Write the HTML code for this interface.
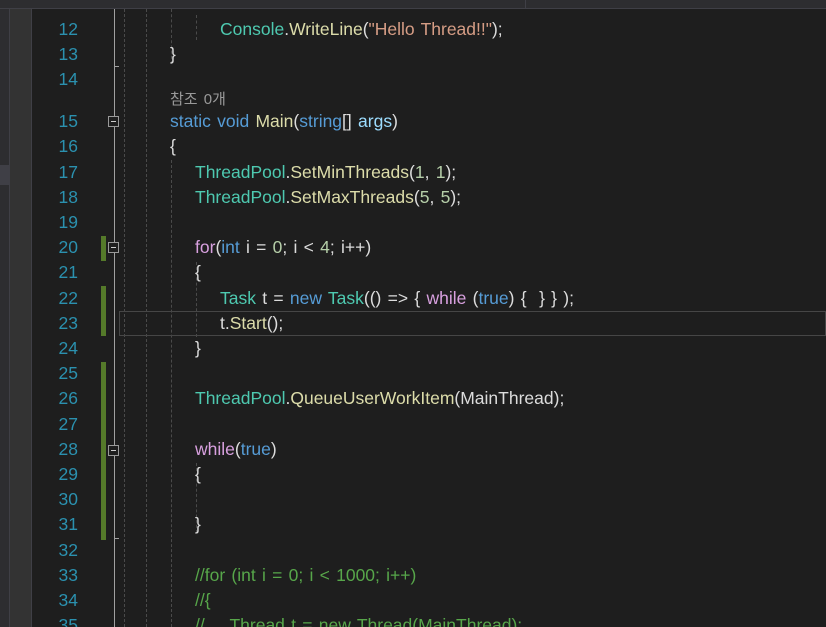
<!DOCTYPE html><html><head><meta charset="utf-8"><style>
html,body{margin:0;width:826px;height:627px;overflow:hidden}
body{background:#1e1e1e;position:relative;font-family:"Liberation Sans","Noto Sans CJK KR",sans-serif;font-size:17.5px;color:#dcdcdc}
.a{position:absolute}
.ln{position:absolute;left:30px;width:48px;text-align:right;color:#2b91af;height:25px;line-height:25px}
.c{position:absolute;white-space:pre;height:25px;line-height:25px;word-spacing:1.4px}
.k{color:#569cd6}.t{color:#4ec9b0}.m{color:#dcdcaa}.s{color:#d69d85}.n{color:#b5cea8}.cm{color:#57a64a}.p{color:#d8a0df}.v{color:#9cdcfe}
.g{position:absolute;width:0;border-left:1px dashed #4a4a4a}
.gb{position:absolute;left:101px;width:5px;background:#557a2a}
.box{position:absolute;left:108px;width:9px;height:9px;border:1px solid #999;background:#1e1e1e}
.box:after{content:"";position:absolute;left:2px;top:4px;width:5px;height:1px;background:#ccc}
</style></head><body>
<div class="a" style="left:0;top:0;width:826px;height:8px;background:#2d2d30;border-bottom:1px solid #3f3f46"></div>
<div class="a" style="left:525px;top:0;width:1px;height:8px;background:#3f3f46"></div>
<div class="a" style="left:0;top:9px;width:9px;height:618px;background:#2d2d30"></div>
<div class="a" style="left:0;top:165px;width:9px;height:20px;background:#3f3f46"></div>
<div class="a" style="left:9px;top:9px;width:21px;height:618px;background:#333333;border-left:1px solid #3f3f46;border-right:1px solid #3f3f46"></div>
<div class="a" style="left:114px;top:9px;width:1px;height:618px;background:#a0a0a0"></div>
<div class="a" style="left:114px;top:66px;width:5px;height:1px;background:#a0a0a0"></div>
<div class="a" style="left:114px;top:538px;width:5px;height:1px;background:#a0a0a0"></div>
<div class="g" style="left:124px;top:9px;height:618px"></div>
<div class="g" style="left:146px;top:9px;height:618px"></div>
<div class="g" style="left:171px;top:9px;height:55px"></div>
<div class="g" style="left:171px;top:160px;height:467px"></div>
<div class="g" style="left:196px;top:15px;height:25px"></div>
<div class="g" style="left:196px;top:262px;height:75px"></div>
<div class="g" style="left:196px;top:463px;height:70px"></div>
<div class="a" style="left:119px;top:311px;width:707px;height:25px;border:1px solid #464646;box-sizing:border-box"></div>
<div class="gb" style="top:236px;height:25px"></div>
<div class="gb" style="top:286px;height:50px"></div>
<div class="gb" style="top:362px;height:178px"></div>
<div class="box" style="top:116px"></div>
<div class="box" style="top:242px"></div>
<div class="box" style="top:445px"></div>

<div class="ln" style="top:17px">12</div><div class="c" style="left:220px;top:17px"><span class="t">Console</span>.<span class="m">WriteLine</span>(<span class="s">"Hello Thread!!"</span>);</div>
<div class="ln" style="top:42px">13</div><div class="c" style="left:170px;top:42px">}</div>
<div class="ln" style="top:67px">14</div>
<div class="c" style="left:170px;top:89px;font-size:15px;color:#999;height:22px;line-height:22px;word-spacing:2px">참조 0개</div>
<div class="ln" style="top:109px">15</div><div class="c" style="left:170px;top:109px"><span class="k">static void</span> <span class="m">Main</span>(<span class="k">string</span>[] <span class="v">args</span>)</div>
<div class="ln" style="top:134px">16</div><div class="c" style="left:170px;top:134px">{</div>
<div class="ln" style="top:160px">17</div><div class="c" style="left:195px;top:160px"><span class="t">ThreadPool</span>.<span class="m">SetMinThreads</span>(<span class="n">1</span>, <span class="n">1</span>);</div>
<div class="ln" style="top:185px">18</div><div class="c" style="left:195px;top:185px"><span class="t">ThreadPool</span>.<span class="m">SetMaxThreads</span>(<span class="n">5</span>, <span class="n">5</span>);</div>
<div class="ln" style="top:210px">19</div>
<div class="ln" style="top:235px">20</div><div class="c" style="left:195px;top:235px"><span class="p">for</span>(<span class="k">int</span> i = <span class="n">0</span>; i &lt; <span class="n">4</span>; i++)</div>
<div class="ln" style="top:260px">21</div><div class="c" style="left:195px;top:260px">{</div>
<div class="ln" style="top:286px">22</div><div class="c" style="left:220px;top:286px"><span class="t">Task</span> t = <span class="k">new</span> <span class="t">Task</span>(() =&gt; { <span class="p">while</span> (<span class="k">true</span>) {  } } );</div>
<div class="ln" style="top:311px">23</div><div class="c" style="left:220px;top:311px">t.<span class="m">Start</span>();</div>
<div class="ln" style="top:336px">24</div><div class="c" style="left:195px;top:336px">}</div>
<div class="ln" style="top:361px">25</div>
<div class="ln" style="top:386px">26</div><div class="c" style="left:195px;top:386px"><span class="t">ThreadPool</span>.<span class="m">QueueUserWorkItem</span>(MainThread);</div>
<div class="ln" style="top:412px">27</div>
<div class="ln" style="top:437px">28</div><div class="c" style="left:195px;top:437px"><span class="p">while</span>(<span class="k">true</span>)</div>
<div class="ln" style="top:462px">29</div><div class="c" style="left:195px;top:462px">{</div>
<div class="ln" style="top:487px">30</div>
<div class="ln" style="top:512px">31</div><div class="c" style="left:195px;top:512px">}</div>
<div class="ln" style="top:538px">32</div>
<div class="ln" style="top:563px">33</div><div class="c cm" style="left:195px;top:563px">//for (int i = 0; i &lt; 1000; i++)</div>
<div class="ln" style="top:588px">34</div><div class="c cm" style="left:195px;top:588px">//{</div>
<div class="ln" style="top:613px">35</div><div class="c cm" style="left:195px;top:613px">//    Thread t = new Thread(MainThread);</div>
</body></html>
